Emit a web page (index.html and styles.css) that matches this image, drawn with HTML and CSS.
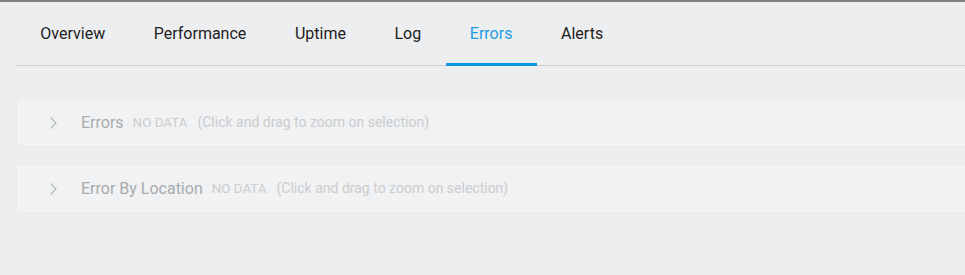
FILE: index.html
```html
<!DOCTYPE html>
<html>
<head>
<meta charset="utf-8">
<link rel="stylesheet" href="styles.css">
</head>
<body>
<div class="page">
  <nav class="tabs">
    <div class="tab">Overview</div>
    <div class="tab">Performance</div>
    <div class="tab">Uptime</div>
    <div class="tab">Log</div>
    <div class="tab active">Errors</div>
    <div class="tab">Alerts</div>
  </nav>
  <div class="panels">
    <div class="panel">
      <svg class="chev" width="8" height="14" viewBox="0 0 8 14"><path d="M1.5 1.5 L7 7 L1.5 12.5" fill="none" stroke="#bcbfc1" stroke-width="1.4"/></svg>
      <span class="title">Errors</span>
      <span class="nodata">NO DATA</span>
      <span class="hint">(Click and drag to zoom on selection)</span>
    </div>
    <div class="panel">
      <svg class="chev" width="8" height="14" viewBox="0 0 8 14"><path d="M1.5 1.5 L7 7 L1.5 12.5" fill="none" stroke="#bcbfc1" stroke-width="1.4"/></svg>
      <span class="title">Error By Location</span>
      <span class="nodata">NO DATA</span>
      <span class="hint">(Click and drag to zoom on selection)</span>
    </div>
  </div>
</div>
</body>
</html>
```
FILE: styles.css
```css
html, body {
  margin: 0;
  padding: 0;
  background: #edeef0;
  overflow: hidden;
  font-family: Roboto, "Liberation Sans", sans-serif;
}
.page {
  border-top: 2px solid #808080;
  padding-left: 16px;
  width: calc(100% + 20px);
  box-sizing: border-box;
}
.tabs {
  display: flex;
  height: 63px;
  border-bottom: 1px solid #cfd0d2;
}
.tab {
  padding: 0 24.3px;
  line-height: 63px;
  font-size: 16px;
  font-weight: 400;
  color: #1e2022;
  box-sizing: border-box;
}
.tab.active {
  color: #1f9be3;
  border-bottom: 3px solid #0f96dd;
  height: 64px;
  line-height: 63px;
}
.panels {
  display: flex;
  flex-direction: column;
  gap: 17px;
  padding-top: 32px;
}
.panel {
  display: flex;
  align-items: center;
  height: 49px;
  box-sizing: border-box;
  background: #f0f2f3;
  border: 1px solid #e8eaeb;
  border-radius: 3px;
  padding-left: 32px;
  padding-bottom: 1px;
}
.chev {
  margin-right: 24px;
  margin-top: 1px;
}
.title {
  font-size: 16px;
  font-weight: 400;
  color: #a9abad;
  margin-right: 9px;
}
.nodata {
  font-size: 13.4px;
  color: #cbcdcf;
  margin-right: 10px;
}
.hint {
  font-size: 14px;
  color: #cbcdcf;
}
```
